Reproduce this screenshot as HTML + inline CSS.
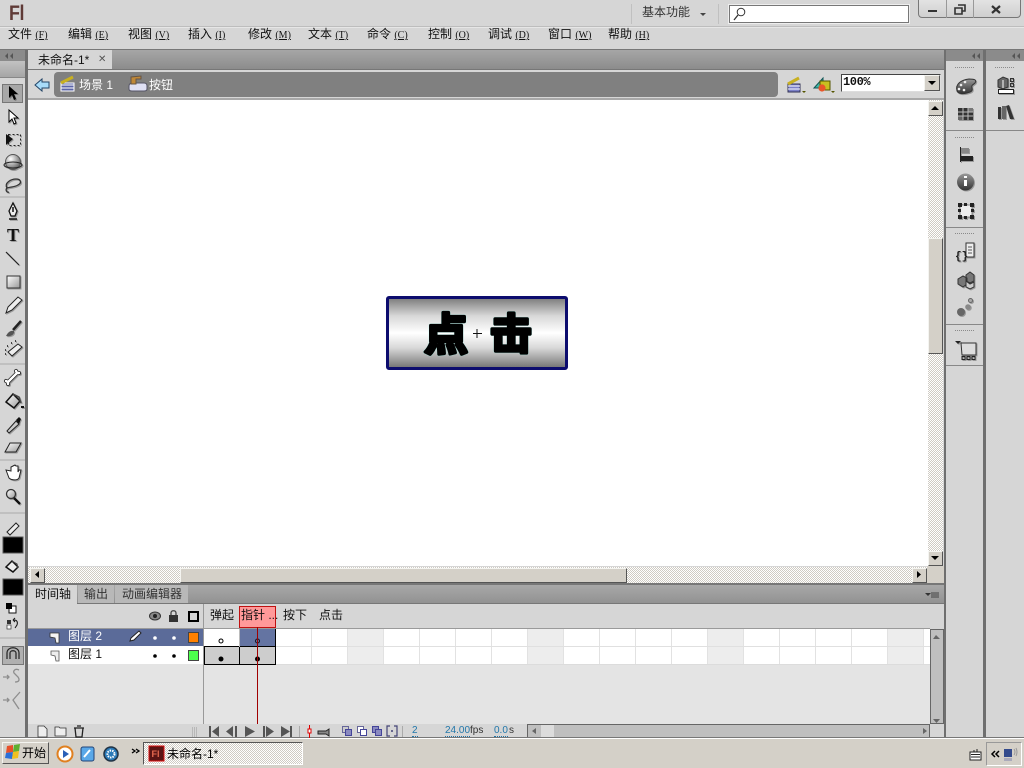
<!DOCTYPE html>
<html><head><meta charset="utf-8"><style>
html,body{margin:0;padding:0;width:1024px;height:768px;overflow:hidden;background:#d6d6d6}
body{position:relative;font-family:"Liberation Sans","WenQuanYi Zen Hei","Noto Sans CJK SC",sans-serif;font-size:12px;color:#111}
.a{position:absolute}
.t{position:absolute;white-space:nowrap;line-height:14px;font-size:12px}
.t u{font-size:10px;font-family:"Liberation Serif",serif}
.chk{background:conic-gradient(#cfcbc3 25%,#fff 0 50%,#cfcbc3 0 75%,#fff 0) 0 0/2px 2px}
.btn{position:absolute;background:#d4d0c8;border:1px solid;border-color:#f4f4f0 #555 #555 #f4f4f0;box-sizing:border-box}
.sh{filter:drop-shadow(1px 1px 0 rgba(0,0,0,.28))}
</style></head><body>
<div class="a" style="left:0;top:26px;width:1024px;height:1px;background:#bdbdbd"></div>
<div class="a" style="left:0;top:27px;width:1024px;height:1px;background:#e6e6e6"></div>
<div class="a" style="left:9px;top:2px;font:bold 21px 'Liberation Sans',sans-serif;color:#5f3a36;line-height:24px;letter-spacing:-.5px;transform:scaleX(.85);transform-origin:left">Fl</div>
<div class="a" style="left:631px;top:4px;width:1px;height:20px;background:#c0c0c0"></div>
<div class="a" style="left:718px;top:4px;width:1px;height:20px;background:#c0c0c0"></div>
<div class="t" style="left:642px;top:5px;color:#333">基本功能</div>
<div class="a" style="left:729px;top:5px;width:180px;height:18px;box-sizing:border-box;background:#fff;border:1px solid #777;outline:1px solid #eee"></div>
<div class="a" style="left:918px;top:-2px;width:103px;height:20px;box-sizing:border-box;border:1px solid #777;border-radius:0 0 4px 4px;background:linear-gradient(#e4e4e4,#cfcfcf)"></div>
<div class="a" style="left:946px;top:0;width:1px;height:18px;background:#999"></div>
<div class="a" style="left:973px;top:0;width:1px;height:18px;background:#999"></div>

<div class="t" style="left:8px;top:27px">文件 <u>(F)</u></div>
<div class="t" style="left:68px;top:27px">编辑 <u>(E)</u></div>
<div class="t" style="left:128px;top:27px">视图 <u>(V)</u></div>
<div class="t" style="left:188px;top:27px">插入 <u>(I)</u></div>
<div class="t" style="left:248px;top:27px">修改 <u>(M)</u></div>
<div class="t" style="left:308px;top:27px">文本 <u>(T)</u></div>
<div class="t" style="left:367px;top:27px">命令 <u>(C)</u></div>
<div class="t" style="left:428px;top:27px">控制 <u>(O)</u></div>
<div class="t" style="left:488px;top:27px">调试 <u>(D)</u></div>
<div class="t" style="left:548px;top:27px">窗口 <u>(W)</u></div>
<div class="t" style="left:608px;top:27px">帮助 <u>(H)</u></div>

<!-- main dark frame -->
<div class="a" style="left:0;top:49px;width:1024px;height:1px;background:#777"></div>
<div class="a" style="left:25px;top:50px;width:3px;height:688px;background:#6f6f6f"></div>
<div class="a" style="left:944px;top:50px;width:2px;height:688px;background:#6f6f6f"></div>
<div class="a" style="left:983px;top:50px;width:3px;height:688px;background:#6f6f6f"></div>
<div class="a" style="left:1022px;top:50px;width:2px;height:688px;background:#d6d6d6"></div>
<!-- tool header -->
<div class="a" style="left:0;top:50px;width:25px;height:11px;background:#8b8b8b"></div>
<div class="a" style="left:0;top:61px;width:25px;height:16px;background:linear-gradient(#c2c2c2,#a6a6a6)"></div>
<div class="a" style="left:0;top:77px;width:25px;height:1px;background:#888"></div>

<!-- doc tabs -->
<div class="a" style="left:28px;top:50px;width:916px;height:19px;background:linear-gradient(#a6a6a6,#8c8c8c)"></div>
<div class="a" style="left:28px;top:50px;width:84px;height:19px;background:#d6d6d6"></div>
<div class="t" style="left:38px;top:53px">未命名-1*</div>
<div class="t" style="left:98px;top:53px;font-size:10px;color:#555">✕</div>
<div class="a" style="left:28px;top:69px;width:916px;height:1px;background:#777"></div>
<div class="a" style="left:54px;top:72px;width:724px;height:25px;background:#808080;border-radius:4px"></div>
<div class="t" style="left:79px;top:78px;color:#fff">场景 1</div>
<div class="t" style="left:149px;top:78px;color:#fff">按钮</div>
<div class="a" style="left:841px;top:74px;width:100px;height:18px;box-sizing:border-box;background:#fff;border:1px solid;border-color:#444 #ddd #ddd #444"></div>
<div class="t" style="left:843px;top:75px;font-weight:bold;font-size:12px;font-family:'Liberation Mono',monospace;letter-spacing:-.4px">100%</div>
<div class="btn" style="left:924px;top:75px;width:16px;height:16px"></div>

<!-- stage -->
<div class="a" style="left:28px;top:98px;width:916px;height:2px;background:#a8a8a8"></div>
<div class="a" style="left:28px;top:100px;width:900px;height:466px;background:#fff"></div>
<div class="a chk" style="left:928px;top:100px;width:15px;height:467px"></div>
<div class="btn" style="left:928px;top:238px;width:15px;height:116px"></div>
<div class="btn" style="left:928px;top:101px;width:15px;height:15px"></div>
<div class="btn" style="left:928px;top:551px;width:15px;height:15px"></div>
<div class="a chk" style="left:28px;top:567px;width:899px;height:16px"></div>
<div class="btn" style="left:30px;top:568px;width:15px;height:15px"></div>
<div class="btn" style="left:180px;top:568px;width:447px;height:15px"></div>
<div class="btn" style="left:912px;top:568px;width:15px;height:15px"></div>
<div class="a" style="left:927px;top:566px;width:17px;height:17px;background:#d4d0c8"></div>

<!-- stage button -->
<div class="a" style="left:386px;top:296px;width:182px;height:74px;box-sizing:border-box;border:3px solid #0c0c6e;border-radius:3px;background:linear-gradient(#808080 0,#d8d8d8 25%,#fff 50%,#d8d8d8 72%,#787878 100%)"></div>

<!-- timeline -->
<div class="a" style="left:28px;top:583px;width:916px;height:2px;background:#777"></div>
<div class="a" style="left:28px;top:585px;width:916px;height:18px;background:linear-gradient(#a8a8a8,#929292)"></div>
<div class="a" style="left:28px;top:603px;width:916px;height:1px;background:#777"></div>
<div class="a" style="left:28px;top:585px;width:49px;height:19px;background:#d6d6d6"></div>
<div class="a" style="left:78px;top:585px;width:36px;height:18px;background:#b8b8b8"></div>
<div class="a" style="left:115px;top:585px;width:73px;height:18px;background:#b8b8b8"></div>
<div class="t" style="left:35px;top:587px">时间轴</div>
<div class="t" style="left:84px;top:587px;color:#333">输出</div>
<div class="t" style="left:122px;top:587px;color:#333">动画编辑器</div>
<div class="a" style="left:28px;top:604px;width:916px;height:24px;background:#d6d6d6"></div>
<div class="a" style="left:28px;top:628px;width:902px;height:1px;background:#9a9a9a"></div>
<div class="a" style="left:28px;top:629px;width:902px;height:95px;background:#e4e4e4"></div>
<div class="a" style="left:28px;top:629px;width:175px;height:17px;background:#5b6b99"></div>
<div class="a" style="left:28px;top:646px;width:175px;height:18px;background:#fff"></div>
<div class="a" style="left:203px;top:604px;width:1px;height:133px;background:#999"></div>
<div class="t" style="left:68px;top:629px;color:#fff">图层 2</div>
<div class="t" style="left:68px;top:647px">图层 1</div>
<div class="t" style="left:210px;top:608px">弹起</div>
<div class="a" style="left:239px;top:606px;width:37px;height:22px;box-sizing:border-box;background:#ff9999;border:1px solid #c01010"></div>
<div class="t" style="left:241px;top:608px">指针 ...</div>
<div class="t" style="left:283px;top:608px">按下</div>
<div class="t" style="left:319px;top:608px">点击</div>
<!-- frames -->
<div class="a" style="left:204px;top:629px;width:726px;height:36px;background-color:#fff;background-image:linear-gradient(90deg,transparent 35px,#e2e2e2 35px);background-size:36px 100%"></div>
<div class="a" style="left:348px;top:629px;width:35px;height:36px;background:#ededed"></div>
<div class="a" style="left:528px;top:629px;width:35px;height:36px;background:#ededed"></div>
<div class="a" style="left:708px;top:629px;width:35px;height:36px;background:#ededed"></div>
<div class="a" style="left:888px;top:629px;width:35px;height:36px;background:#ededed"></div>
<div class="a" style="left:204px;top:646px;width:726px;height:1px;background:#e0e0e0"></div>
<div class="a" style="left:204px;top:664px;width:726px;height:1px;background:#dcdcdc"></div>
<div class="a" style="left:240px;top:629px;width:36px;height:17px;background:#6474a2"></div>
<div class="a" style="left:204px;top:646px;width:72px;height:19px;box-sizing:border-box;background:#cdcdcd;border:1px solid #000;"></div>
<div class="a" style="left:239px;top:646px;width:1px;height:18px;background:#000"></div>
<div class="a" style="left:275px;top:629px;width:1px;height:18px;background:#000"></div>
<div class="a" style="left:239px;top:629px;width:1px;height:18px;background:#bbb"></div>
<!-- timeline scrollbars/bottom -->
<div class="a" style="left:930px;top:629px;width:14px;height:95px;box-sizing:border-box;background:#bfbfbf;border:1px solid #666"></div>
<div class="a" style="left:28px;top:724px;width:916px;height:13px;background:#d6d6d6"></div>
<div class="a" style="left:527px;top:724px;width:403px;height:14px;box-sizing:border-box;background:#bfbfbf;border:1px solid #666"></div>
<div class="a" style="left:541px;top:725px;width:13px;height:12px;background:#dcdcdc"></div>
<div class="t" style="left:412px;top:724px;font-size:10px;line-height:13px;color:#27a;border-bottom:1px dotted #27a;height:12px">2</div>
<div class="t" style="left:445px;top:724px;font-size:10px;line-height:13px;color:#27a;border-bottom:1px dotted #27a;height:12px">24.00</div>
<div class="t" style="left:470px;top:724px;font-size:10px;line-height:13px;color:#333">fps</div>
<div class="t" style="left:494px;top:724px;font-size:10px;line-height:13px;color:#27a;border-bottom:1px dotted #27a;height:12px">0.0</div>
<div class="t" style="left:509px;top:724px;font-size:10px;line-height:13px;color:#333">s</div>

<!-- right panels -->
<div class="a" style="left:946px;top:50px;width:37px;height:11px;background:#8b8b8b"></div>
<div class="a" style="left:986px;top:50px;width:38px;height:11px;background:#8b8b8b"></div>
<div class="a" style="left:946px;top:130px;width:37px;height:1px;background:#888"></div>
<div class="a" style="left:986px;top:130px;width:38px;height:1px;background:#888"></div>
<div class="a" style="left:946px;top:227px;width:37px;height:1px;background:#888"></div>
<div class="a" style="left:946px;top:324px;width:37px;height:1px;background:#888"></div>
<div class="a" style="left:946px;top:365px;width:37px;height:1px;background:#888"></div>

<!-- taskbar -->
<div class="a" style="left:0;top:737px;width:1024px;height:31px;background:#d4d0c8"></div>
<div class="a" style="left:0;top:737px;width:1024px;height:1px;background:#777"></div>
<div class="a" style="left:0;top:738px;width:1024px;height:1px;background:#fff"></div>
<div class="btn" style="left:2px;top:742px;width:47px;height:22px"></div>
<div class="t" style="left:22px;top:746px;color:#000">开始</div>
<div class="a chk" style="left:143px;top:742px;width:160px;height:23px;box-sizing:border-box;border:1px solid;border-color:#555 #fff #fff #555"></div>
<div class="t" style="left:167px;top:747px;color:#000">未命名-1*</div>
<div class="a" style="left:986px;top:742px;width:36px;height:24px;box-sizing:border-box;border:1px solid;border-color:#999 #fff #fff #999"></div>

<svg class="a" style="left:0;top:0" width="1024" height="768" viewBox="0 0 1024 768" fill="none">
<defs>
<radialGradient id="sp" cx=".35" cy=".3" r=".8"><stop offset="0" stop-color="#fff"/><stop offset="1" stop-color="#555"/></radialGradient>
<linearGradient id="lg" x1="0" y1="0" x2="1" y2="1"><stop offset="0" stop-color="#fff"/><stop offset="1" stop-color="#999"/></linearGradient>
<linearGradient id="dg" x1="0" y1="0" x2="0" y2="1"><stop offset="0" stop-color="#999"/><stop offset="1" stop-color="#333"/></linearGradient>
</defs>
<!-- stage text -->
<g font-family="Noto Sans CJK SC" font-weight="bold" stroke-linejoin="round">
<text x="424" y="350" font-size="44" fill="#000" stroke="#7fe" stroke-width="4.200" opacity=".35">点</text>
<text x="490" y="349" font-size="42" fill="#000" stroke="#7fe" stroke-width="4.200" opacity=".35">击</text>
<text x="424" y="350" font-size="44" fill="#000" stroke="#000" stroke-width="3.400">点</text>
<text x="490" y="349" font-size="42" fill="#000" stroke="#000" stroke-width="3.400">击</text>
</g>
<!-- title -->
<path d="M700 13h6l-3 3z" fill="#444"/>
<circle cx="741" cy="12" r="3.800" stroke="#333"/><path d="M738 15l-4 5" stroke="#333" stroke-width="1.300"/>
<path d="M928 10h9v2h-9z" fill="#333"/>
<path d="M955 8h7v6h-7zM958 5h7v6h-3" stroke="#333" stroke-width="1.600"/>
<path d="M992 6l8 7M1000 6l-8 7" stroke="#333" stroke-width="2.200"/>
<!-- collapse chevrons -->
<g fill="#555"><path d="M8 53l-3 3 3 3zM13 53l-3 3 3 3z"/><path d="M975 53l-3 3 3 3zM980 53l-3 3 3 3zM1015 53l-3 3 3 3zM1020 53l-3 3 3 3z"/></g>
<!-- back arrow + scene icons -->
<path d="M35 85l7-6v3h7v6h-7v3z" fill="#a8dcfa" stroke="#246" stroke-width="1"/>
<path d="M61 83h13v8H61z" fill="#5b64a8" stroke="#fff" stroke-width="1"/><path d="M61 85h13M61 88h13" stroke="#fff"/><path d="M61 83l12-6" stroke="#c8b020" stroke-width="3"/>
<path d="M129 86q0-3 4-3h11q3 0 3 3v3q0 2-3 2h-12q-3 0-3-2z" fill="#dfe0f5" stroke="#556"/><path d="M131 84v-7l10-1v3h-5v5z" fill="#c08838" stroke="#654"/>
<path d="M788 84h12v8h-12z" fill="#7b80c8" stroke="#335"/><path d="M788 86h12M788 89h12" stroke="#fff"/><path d="M788 84l11-6" stroke="#c8b020" stroke-width="3"/><path d="M802 91h4l-2 2z" fill="#550"/>
<path d="M814 88l9-10v10z" fill="#3fb8a8" stroke="#155"/><path d="M820 81h10v9h-10z" fill="#c8c020" stroke="#550"/><circle cx="822" cy="88" r="3.600" fill="#e8562a"/><path d="M831 91h4l-2 2z" fill="#550"/>
<path d="M928 81h8l-4 4z" fill="#000"/>
<!-- scroll arrows -->
<g fill="#000"><path d="M935 106l-4 4h8zM931 556h8l-4 4zM39 571v7l-4-3.500zM917 571v7l4-3.500z"/></g>
<path d="M936 635l-3 4h7zM933 719h7l-3.500 4zM536 728v6l-4-3zM923 728v6l4-3z" fill="#666"/>
<!-- stage crosshair -->
<path d="M477 329v9M473 333.500h9" stroke="#111"/>
<!-- tools -->
<rect x="2.500" y="84.500" width="20" height="18" fill="#a8a8a8" stroke="#777"/>
<g class="sh">
<path d="M9 86v12l3-3 2 5 2-1-2-5h4z" fill="#000"/>
<path d="M9 110v12l3-3 2 5 2-1-2-5h4z" fill="#fff" stroke="#000"/>
<rect x="8.500" y="134.500" width="12" height="11" stroke="#222" stroke-dasharray="2 2"/><path d="M6 134l7 5-7 6z" fill="#111"/>
<circle cx="13" cy="162" r="7.500" fill="url(#sp)" stroke="#555"/><ellipse cx="13" cy="165" rx="9" ry="3" stroke="#222"/>
<path d="M7 188c-3-5 4-9 9-9 5 0 6 4 2 6-3 2-8 2-11 3zM7 188c-2 2 0 5 2 4" stroke="#333" stroke-width="1.300"/>
<path d="M13 203l4 8-2 5h-4l-2-5z" fill="#eee" stroke="#111" stroke-width="1.300"/><path d="M13 207v5M9 219h8" stroke="#111" stroke-width="1.500"/>
<text x="7" y="241" font-family="Liberation Serif" font-weight="bold" font-size="18" fill="#111">T</text>
<path d="M6 252l13 13" stroke="#222" stroke-width="1.200"/>
<rect x="7" y="276" width="13" height="12" fill="url(#lg)" stroke="#333"/>
<path d="M6 313l2-6 10-10 4 3-10 10z" fill="#eee" stroke="#222"/>
<path d="M21 321l-8 9" stroke="#222" stroke-width="2.500"/><path d="M6 336c2-4 5-6 8-5 1 3-3 6-8 5z" fill="#555"/>
<path d="M8 352l10-8 4 3-10 9z" fill="#eee" stroke="#222"/><path d="M5 350h1M7 346h1M11 343h1M15 341h1M5 354h1" stroke="#111" stroke-width="1.500"/>
<path d="M8 382l9-9M6 381l2 1M8 384v-2M16 371l1 2M19 373l-2 0" stroke="#222" stroke-width="4" stroke-linecap="round"/>
<path d="M8 382l9-9M6 381l2 1M8 384v-2M16 371l1 2M19 373l-2 0" stroke="#fff" stroke-width="2.400" stroke-linecap="round"/>
<path d="M6 402l7-8 7 7-6 7z" fill="url(#lg)" stroke="#111" stroke-width="1.500"/><path d="M13 394l6 3 2 6" stroke="#444" stroke-width="1.500"/><path d="M21 407h3" stroke="#111" stroke-width="2"/>
<path d="M7 431l9-10 3 3-10 9z" fill="#ccc" stroke="#222"/><path d="M16 420l3-3 2 2-2 5z" fill="#111"/>
<path d="M5 452l5-9h11l-5 9z" fill="url(#lg)" stroke="#222"/>
<path d="M6 470l3 8c2 2 8 3 10 0l2-8-2 0-1 2 0-6-2 0-1-1-2 1-2 1v4z" fill="#fff" stroke="#222"/>
<circle cx="11" cy="494" r="4.500" fill="url(#lg)" stroke="#333" stroke-width="1.300"/><path d="M14 498l6 6" stroke="#111" stroke-width="2.400"/>
</g>
<path d="M0 197h25M0 364h25M0 460h25M0 513h25M0 638h25" stroke="#aaa"/>
<path d="M7 532l9-9 3 3-9 9z" fill="#eee" stroke="#222"/>
<rect x="3" y="537" width="20" height="16" fill="#000" stroke="#555"/>
<path d="M6 567l6-6 6 6-5 5z" fill="#eee" stroke="#111" stroke-width="1.500"/><path d="M12 561l5 3 1 4" stroke="#444"/>
<rect x="3" y="579" width="20" height="16" fill="#000" stroke="#555"/>
<rect x="9" y="606" width="7" height="7" fill="#fff" stroke="#111"/><rect x="6" y="603" width="6" height="6" fill="#000"/>
<rect x="7" y="620" width="4" height="4" fill="#333"/><rect x="7" y="625" width="4" height="4" fill="#fff" stroke="#333" stroke-width=".7"/><path d="M14 620c3 0 4 2 3 5l-2 3M13 620l2-2M13 620l2 2" stroke="#111"/>
<rect x="2.500" y="646.500" width="21" height="18" fill="#b0b0b0" stroke="#777"/>
<path d="M7 659v-6c0-7 12-7 12 0v6M10 659v-6c0-3 6-3 6 0v6" stroke="#222" stroke-width="1.200"/>
<path d="M3 677h6M7 675l2 2-2 2M19 670c-4-2-6 1-5 3l4 4c2 3 1 5-3 5" stroke="#8e8e8e" stroke-width="1.300"/>
<path d="M3 700h6M7 698l2 2-2 2M20 692l-7 8 6 9" stroke="#8e8e8e" stroke-width="1.300"/>
<!-- right panel grips -->
<g stroke="#8a8a8a" stroke-dasharray="1 1"><path d="M955 67.500h19M955 137.500h19M955 233.500h19M955 330.500h19M995 67.500h19"/></g>
<g class="sh">
<path d="M957 91c-2-7 4-11 12-12 6 0 8 1 6 4-2 2-4 2-3 5 1 3-1 4-5 5-4 1-9 1-10-2z" fill="url(#dg)" stroke="#333"/><circle cx="961" cy="85" r="1.300" fill="#eee"/><circle cx="965" cy="82" r="1.300" fill="#eee"/><circle cx="959" cy="89" r="1.300" fill="#eee"/><circle cx="964" cy="90" r="1.300" fill="#eee"/>
<rect x="958" y="108" width="15" height="12" fill="#333"/><rect x="968" y="108" width="5" height="4" fill="#777"/><rect x="958" y="116" width="5" height="4" fill="#666"/><path d="M958 112h15M958 116h15M963 108v12M968 108v12" stroke="#bbb"/>
<path d="M960.500 147v15" stroke="#222"/><rect x="961" y="148" width="8" height="5" fill="#888"/><rect x="961" y="156" width="12" height="5" fill="#222"/>
<circle cx="965.500" cy="182" r="8.500" fill="url(#dg)"/><path d="M964 180h3v6h-3zM964 176h3v2h-3z" fill="#fff"/>
<rect x="960" y="205" width="12" height="12" fill="#eee" stroke="#888"/><path d="M958 203h4v4h-4zM970 203h4v4h-4zM958 215h4v4h-4zM970 215h4v4h-4zM964 203h3v3h-3zM964 216h3v3h-3zM958 209h3v3h-3zM971 209h3v3h-3z" fill="#222"/>
<path d="M966 243h8v14h-8z" fill="#eee" stroke="#333"/><path d="M968 247h4M968 250h4M968 253h4" stroke="#555"/><text x="955" y="259" font-family="Liberation Mono" font-weight="bold" font-size="11" fill="#222">{}</text>
<path d="M958 279l5-3 4 2v6l-4 3-5-3zM966 275l4-3 4 3v6l-4 2-4-2z" fill="#777" stroke="#333"/><path d="M966 281l4 3 4-2v5l-4 2-4-2z" fill="#ccc" stroke="#333"/>
<circle cx="961" cy="312" r="4" fill="#666"/><circle cx="968" cy="307" r="2.800" fill="#888"/><circle cx="970.500" cy="300.500" r="2" fill="#aaa" stroke="#666"/>
<path d="M955 341h6l-3 3z" fill="#222"/><path d="M961 343h15v12h-14z" fill="#ddd" stroke="#333"/><path d="M962 356.500h3v3h-3zM967 356.500h3v3h-3zM972 356.500h3v3h-3z" stroke="#222"/>
<path d="M998 80l5-3 5 2v8l-5 2-5-2z" fill="#666" stroke="#333"/><path d="M1003 80v8" stroke="#fff"/><rect x="1010.500" y="78.500" width="3" height="3" stroke="#333"/><rect x="1010.500" y="83.500" width="3" height="3" stroke="#333"/><rect x="998.500" y="89.500" width="15" height="4" fill="#fff" stroke="#222"/>
<path d="M998 107h3v12h-3z" fill="#333"/><path d="M1002 106h4v13h-4z" fill="#666"/><path d="M1006 106l3-1 5 14h-4z" fill="#333"/>
</g>
<!-- timeline icons -->
<path d="M925 593h6l-3 3z" fill="#333"/><path d="M931 593h8M931 595h8M931 597h8" stroke="#444"/>
<ellipse cx="155" cy="616" rx="5.500" ry="4" fill="#888" stroke="#333"/><circle cx="155" cy="616" r="2" fill="#222"/>
<rect x="169" y="615" width="9" height="7" fill="#333"/><path d="M171 615v-2c0-3 5-3 5 0v2" stroke="#444" stroke-width="1.300"/>
<rect x="189" y="612" width="9" height="9" stroke="#000" stroke-width="2"/>
<path d="M50 633h9v10h-3l-1-5-5-1z" fill="#f4f4f4" stroke="#333" stroke-width=".8"/><path d="M51 651h8v10h-3l-1-5-4-1z" fill="#eee" stroke="#555" stroke-width=".8"/>
<path d="M130 641l1-3 8-7 2 2-7 7z" fill="#fff" stroke="#222"/>
<g fill="#fff"><circle cx="155" cy="638" r="1.800"/><circle cx="174" cy="638" r="1.800"/></g>
<g fill="#000"><circle cx="155" cy="656" r="1.800"/><circle cx="174" cy="656" r="1.800"/></g>
<rect x="188.500" y="632.500" width="10" height="10" fill="#ff8000" stroke="#444"/>
<rect x="188.500" y="650.500" width="10" height="10" fill="#4dff4d" stroke="#444"/>
<circle cx="221" cy="641" r="2" stroke="#000"/><circle cx="257.500" cy="641" r="2" stroke="#112"/>
<circle cx="221" cy="659" r="2.500" fill="#000"/><circle cx="257.500" cy="659" r="2.500" fill="#000"/>
<path d="M257.500 627v97" stroke="#a00000"/>
<!-- bottom controls -->
<path d="M38 726h6l3 3v8h-9z" fill="#eee" stroke="#333" stroke-width=".8"/><path d="M55 727h4l1 1h6v8H55z" fill="#eee" stroke="#333" stroke-width=".8"/><path d="M74 728h10M75 728l1 9h6l1-9M77 726h4" stroke="#222" stroke-width="1.300"/>
<g stroke="#b8b8b8"><path d="M192.500 727v10M194.500 727v10M196.500 727v10"/></g>
<g fill="#555"><path d="M209 726h2v11h-2zM219 726v11l-7-5.500zM233 726v11l-7-5.500zM235 726h2v11h-2zM245 726l10 5.500-10 5.500zM263 726h2v11h-2zM266 726l8 5.500-8 5.500zM281 726l9 5.500-9 5.500zM290 726h2v11h-2z"/></g>
<path d="M299.500 726v11" stroke="#aaa"/>
<path d="M309.500 725v13" stroke="#d00"/><rect x="308" y="729" width="3" height="4" fill="#fff" stroke="#d00"/>
<path d="M318 731h8l3-2v7l-3-2h-8z" fill="#888" stroke="#222"/>
<rect x="342.500" y="726.500" width="6" height="6" fill="#ccc" stroke="#669"/><rect x="345.500" y="729.500" width="6" height="6" fill="#8a8ac0" stroke="#449"/>
<rect x="357.500" y="726.500" width="6" height="6" fill="#fff" stroke="#669"/><rect x="360.500" y="729.500" width="6" height="6" fill="#fff" stroke="#449"/>
<rect x="372.500" y="726.500" width="6" height="6" fill="#8a8ac0" stroke="#449"/><rect x="375.500" y="729.500" width="6" height="6" fill="#8a8ac0" stroke="#449"/>
<path d="M390 726h-3v10h3M394 726h3v10h-3" stroke="#447" stroke-width="1.200"/><circle cx="392" cy="731" r="1" fill="#447"/>
<path d="M402.500 726v11" stroke="#aaa"/>
<!-- taskbar icons -->
<path d="M7 746l6-1v7l-7 1z" fill="#e8502a"/><path d="M14 745l6-1-1 7-6 1z" fill="#5fb030"/><path d="M6 753l7-1-1 7-7-1z" fill="#2a70d8"/><path d="M13 752l6-1-1 7-6 1z" fill="#f0c020"/>
<circle cx="65" cy="754" r="7.500" fill="#fff" stroke="#e08020" stroke-width="2"/><path d="M63 750l6 4-6 4z" fill="#2a60b8"/>
<rect x="81" y="747" width="13" height="14" rx="2" fill="#5aa8e8" stroke="#247"/><path d="M84 757l6-7" stroke="#fff" stroke-width="2"/>
<circle cx="111" cy="754" r="7" fill="#2a7ab8" stroke="#234" stroke-width="1.500"/><circle cx="111" cy="754" r="3.500" stroke="#fff" stroke-width="2" stroke-dasharray="1.500 1"/>
<path d="M132 749l3 2-3 2M136 749l3 2-3 2" stroke="#000" stroke-width="1.300"/>
<rect x="149" y="746" width="15" height="15" fill="#5a1414" stroke="#e01010"/><text x="151.500" y="757" font-family="Liberation Sans" font-size="9" font-weight="bold" fill="#e86a50">Fl</text>
<rect x="970" y="752" width="11" height="8" fill="#fff" stroke="#222"/><path d="M971 754.500h9M971 757h9M974 750v2M977 749v3" stroke="#222"/>
<path d="M995 751l-3 3 3 3M999 751l-3 3 3 3" stroke="#000" stroke-width="1.500"/>
<rect x="1004" y="749" width="8" height="8" fill="#334a8c"/><rect x="1004" y="758" width="8" height="3" fill="#aab"/><path d="M1014 749q2 3 0 6M1016 748q2 4 0 8" stroke="#999"/>
</svg>
</body></html>
